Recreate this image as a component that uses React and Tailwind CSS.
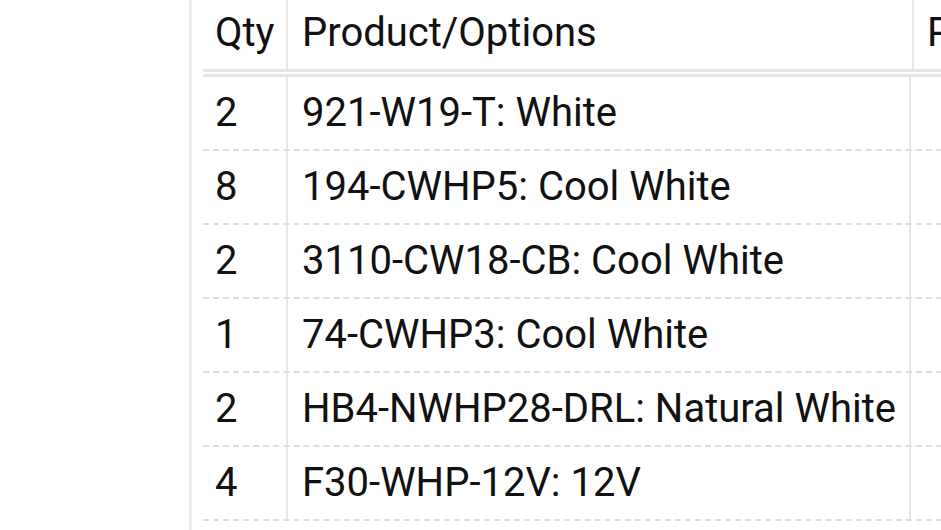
const rows = [
  { qty: 2, product: "921-W19-T: White" },
  { qty: 8, product: "194-CWHP5: Cool White" },
  { qty: 2, product: "3110-CW18-CB: Cool White" },
  { qty: 1, product: "74-CWHP3: Cool White" },
  { qty: 2, product: "HB4-NWHP28-DRL: Natural White" },
  { qty: 4, product: "F30-WHP-12V: 12V" },
];

export default function App() {
  return (
    <div className="h-[530px] w-[941px] overflow-hidden bg-white pl-[189px] font-['Roboto',sans-serif] text-[40px] leading-none text-[#111]">
      <div className="h-full border-l-[3px] border-[#ececec] pl-[11px]">
        {/* header row */}
        <div className="grid w-[1000px] grid-cols-[85px_626px_1fr] border-b-[8px] border-double border-[#e4e4e4]">
          <div className="flex h-[69px] items-center border-r-2 border-[#e6e6e6] pb-[3px] pl-[12px]">Qty</div>
          <div className="flex h-[69px] items-center border-r-2 border-[#e6e6e6] pb-[3px] pl-[14px]">Product/Options</div>
          <div className="flex h-[69px] items-center pb-[3px] pl-[13px]">Price</div>
        </div>
        {/* body rows */}
        {rows.map((r, i) => (
          <div key={i} className="grid w-[1000px] grid-cols-[85px_623px_1fr] border-b-2 border-dashed border-[#dedede]">
            <div className="flex h-[72px] items-center border-r-2 border-[#e6e6e6] pl-[12px]">{r.qty}</div>
            <div className="flex h-[72px] items-center border-r-2 border-[#e6e6e6] pl-[14px]">{r.product}</div>
            <div className="h-[72px]" />
          </div>
        ))}
      </div>
    </div>
  );
}
